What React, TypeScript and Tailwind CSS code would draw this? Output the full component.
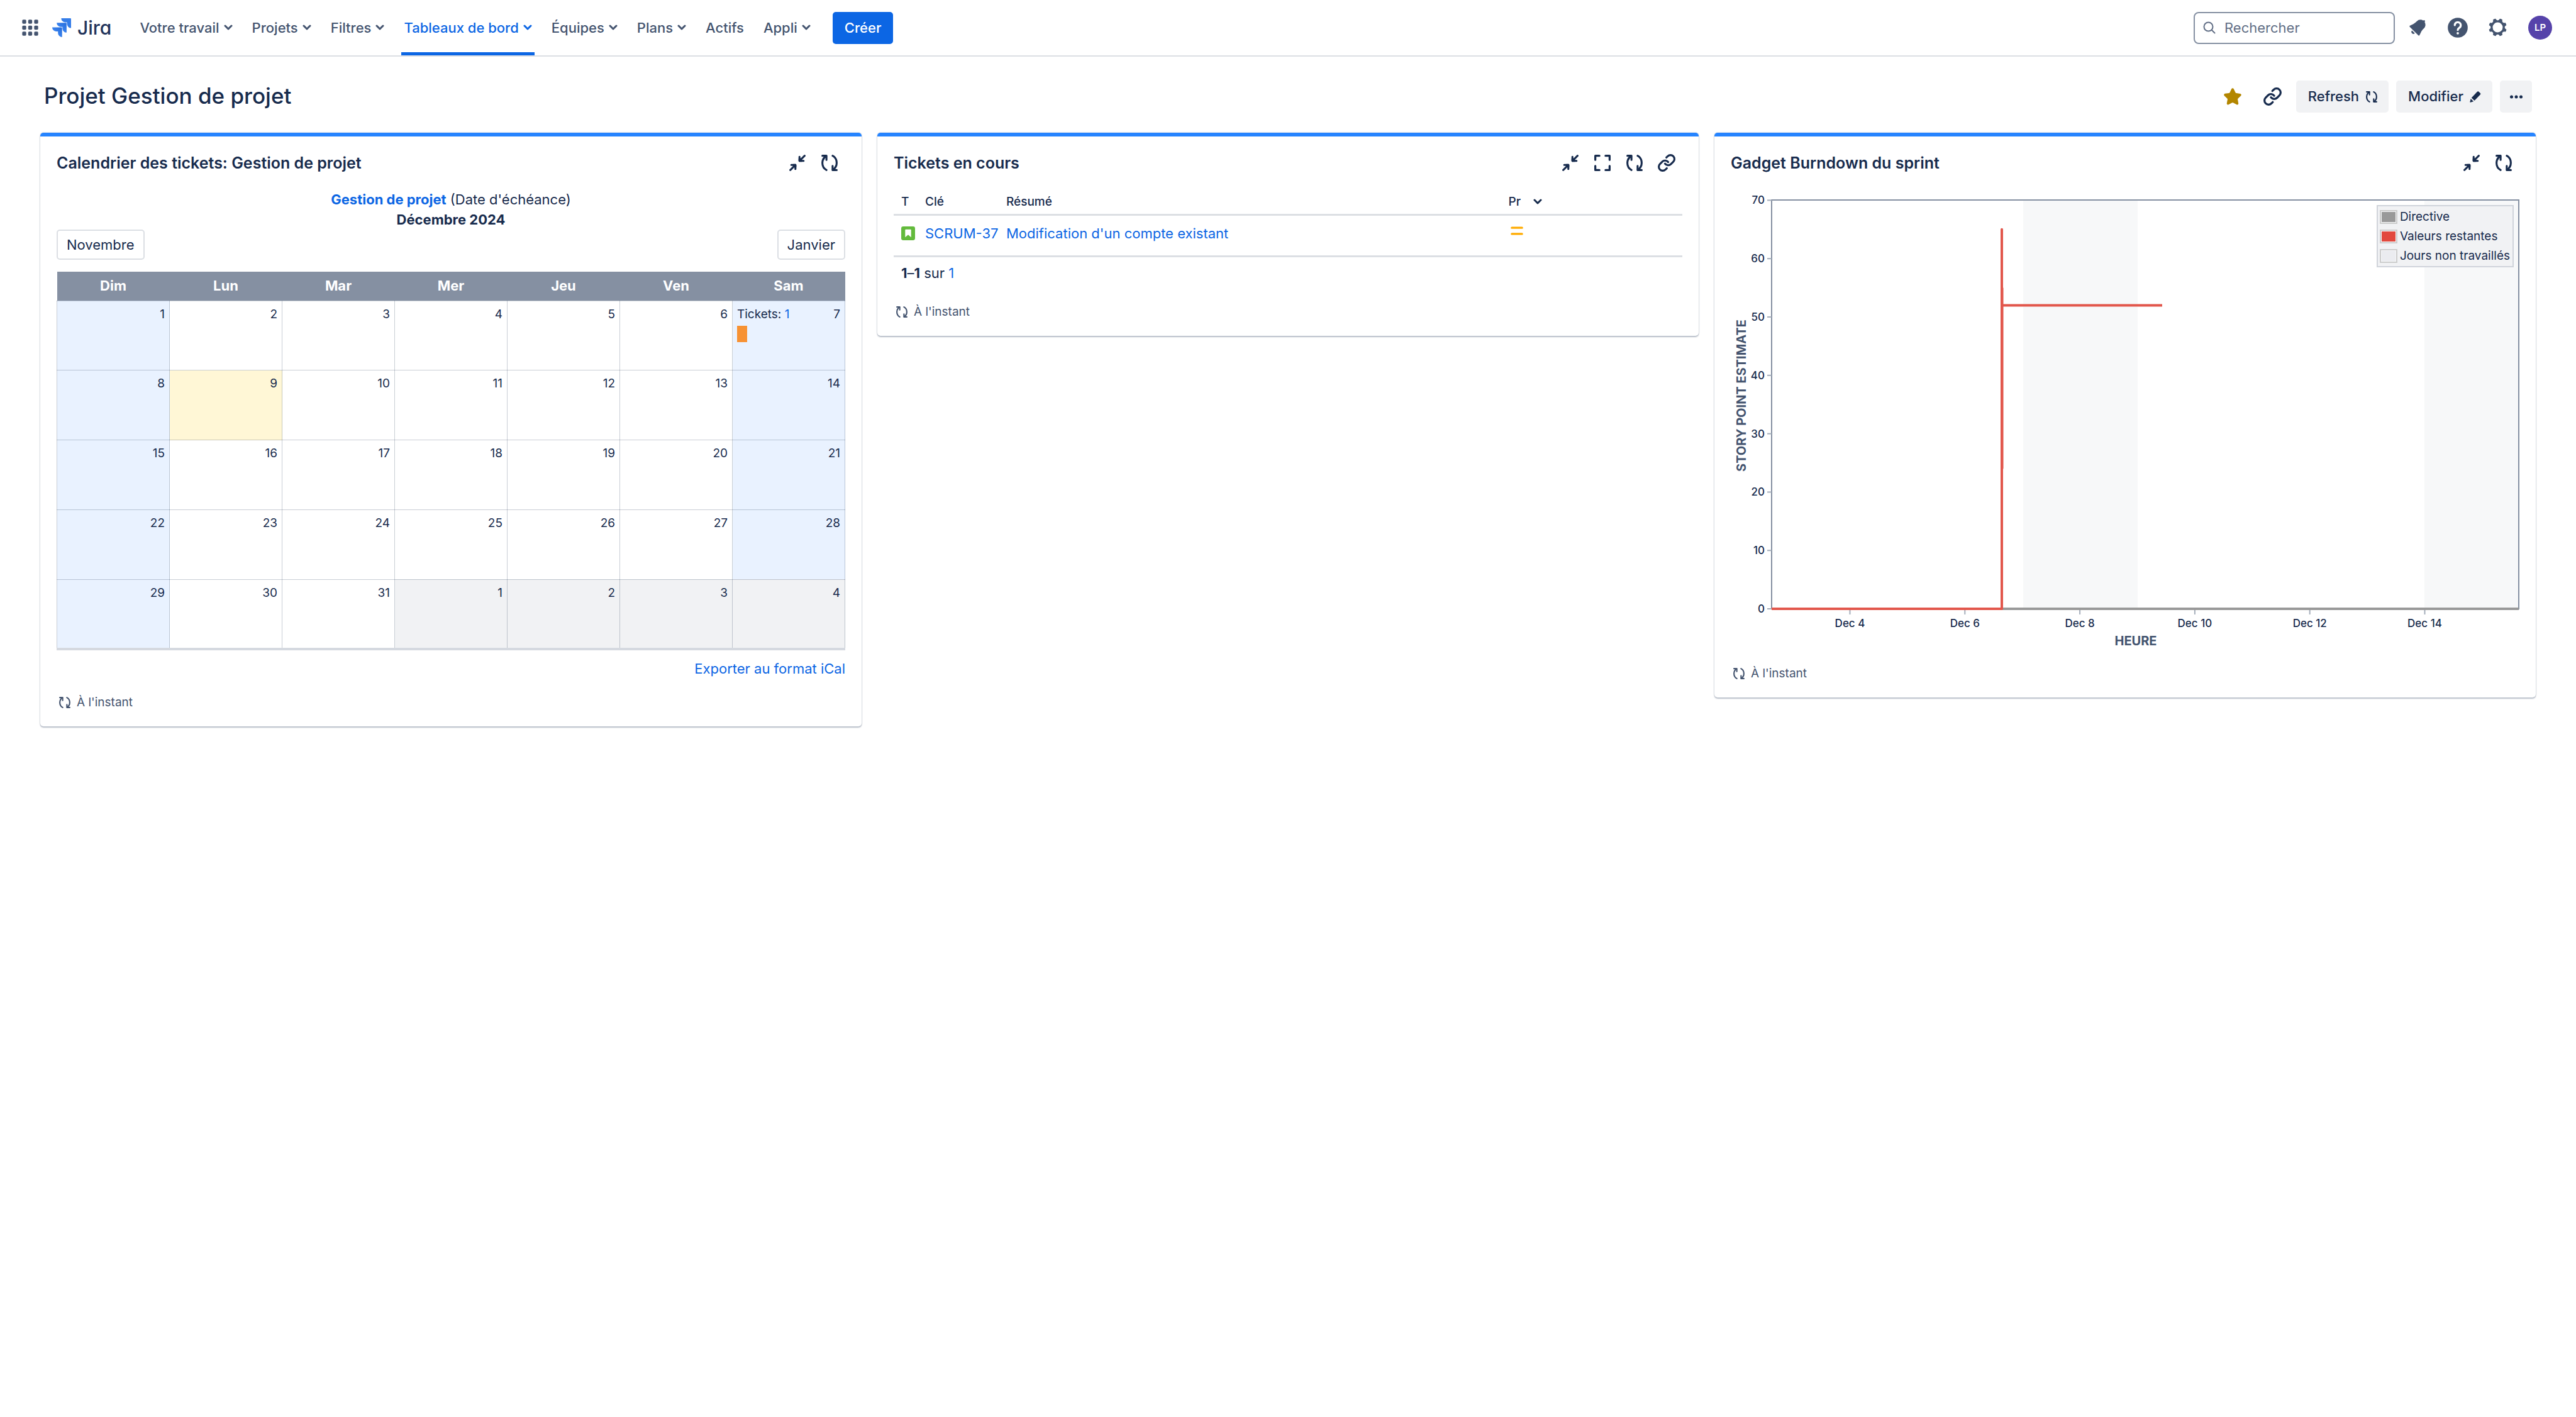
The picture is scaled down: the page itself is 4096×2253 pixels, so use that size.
import type { ReactNode } from "react";
import { Link as LinkIcon, Star } from "lucide-react";

const NAV = [
  { label: "Votre travail", menu: true, active: false },
  { label: "Projets", menu: true, active: false },
  { label: "Filtres", menu: true, active: false },
  { label: "Tableaux de bord", menu: true, active: true },
  { label: "Équipes", menu: true, active: false },
  { label: "Plans", menu: true, active: false },
  { label: "Actifs", menu: false, active: false },
  { label: "Appli", menu: true, active: false },
];

function Chevron() {
  return (
    <svg viewBox="0 0 14 10" className="h-[10px] w-[14px]" fill="none" stroke="currentColor" strokeWidth="3" strokeLinecap="round" strokeLinejoin="round">
      <path d="M2 2l5 5 5-5" />
    </svg>
  );
}

function RefreshIcon({ className }: { className: string }) {
  return (
    <svg viewBox="0 0 16 16" className={className} fill="none" stroke="currentColor" strokeWidth="1.9" strokeLinecap="round" strokeLinejoin="round">
      <path d="M1 1h4v4" />
      <path d="M5 15C2.4 13.6 1 11 1 8c0-2.600 1.200-5.100 3.700-6.700" />
      <path d="M15 15h-4v-4" />
      <path d="M11 1c2.600 1.400 4 4 4 7 0 2.600-1.200 5.100-3.700 6.700" />
    </svg>
  );
}

function CollapseIcon() {
  return (
    <svg viewBox="0 0 16 16" className="size-[26px]" fill="none" stroke="currentColor" strokeWidth="1.9" strokeLinecap="round" strokeLinejoin="round">
      <path d="M15 1l-5 5M10 2v4h4" />
      <path d="M10 4v2h2z" fill="currentColor" />
      <path d="M1 15l5-5M2 10h4v4" />
      <path d="M4 10h2v2z" fill="currentColor" />
    </svg>
  );
}

function ExpandIcon() {
  return (
    <svg viewBox="0 0 16 16" className="size-[26px]" fill="none" stroke="currentColor" strokeWidth="2" strokeLinecap="round" strokeLinejoin="round">
      <path d="M1 5V1h4M11 1h4v4M15 11v4h-4M5 15H1v-4" />
    </svg>
  );
}

function JiraMark() {
  return (
    <svg viewBox="0 0 24 24" className="size-[30px]">
      <defs>
        <linearGradient id="fold" x1="1" y1="0" x2="0.3" y2="0.7">
          <stop offset="0.2" stopColor="#2C72DF" />
          <stop offset="1" stopColor="#3D87F2" />
        </linearGradient>
      </defs>
      <path fill="url(#fold)" d="M11.571 11.513H0a5.218 5.218 0 0 0 5.232 5.215h2.13v2.057A5.215 5.215 0 0 0 12.575 24V12.518a1.005 1.005 0 0 0-1.005-1.005z" />
      <path fill="url(#fold)" d="M17.294 5.757H5.736a5.215 5.215 0 0 0 5.215 5.214h2.129v2.058a5.218 5.218 0 0 0 5.215 5.214V6.758a1.001 1.001 0 0 0-1.001-1.001z" />
      <path fill="#357DE8" d="M23.013 0H11.455a5.215 5.215 0 0 0 5.215 5.215h2.129v2.057A5.215 5.215 0 0 0 24 12.483V1.005A1.001 1.001 0 0 0 23.013 0z" />
    </svg>
  );
}

function TopBar() {
  return (
    <header className="flex h-[90px] items-center justify-between border-b-2 border-[#DCDFE4] pl-[29px] pr-[38px] text-[#44546F]">
      <div className="flex h-full items-center">
        <button type="button" aria-label="Changer d'application">
          <svg viewBox="0 0 24 24" className="size-[38px]" fill="currentColor">
            {[4, 10, 16].map((y) => [4, 10, 16].map((x) => <rect key={`${x}-${y}`} x={x} y={y} width="4" height="4" rx="1" />))}
          </svg>
        </button>
        <a href="#jira" className="ml-4 flex items-center gap-[10px]">
          <JiraMark />
          <span className="text-[30px] leading-[38px] font-medium text-[#22345A] [font-feature-settings:'cv11']">Jira</span>
        </a>
        <nav className="ml-[41px] flex h-full items-stretch gap-[23px]">
          {NAV.map((item) => (
            <button
              key={item.label}
              type="button"
              className={
                item.active
                  ? "relative flex items-center gap-[7px] px-[4px] text-[22px] font-medium text-[#0C66E4]"
                  : "flex items-center gap-[7px] px-[4px] text-[22px] font-medium"
              }
            >
              {item.label}
              {item.menu && <Chevron />}
              {item.active && <span className="absolute inset-x-0 bottom-0 h-[5px] bg-[#0C66E4]" />}
            </button>
          ))}
        </nav>
        <button type="button" className="ml-[31px] h-[51px] rounded-[5px] bg-[#0C66E4] px-[19px] text-[22px] font-medium text-white">
          Créer
        </button>
      </div>
      <div className="flex items-center">
        <label className="mr-[17px] flex h-[51px] w-[320px] items-center gap-[14px] rounded-[8px] border-2 border-[#8590A2] px-[13px]">
          <svg viewBox="0 0 20 20" className="size-5 shrink-0" fill="none" stroke="#626F86" strokeWidth="2" strokeLinecap="round">
            <circle cx="8.500" cy="8.500" r="7" />
            <path d="M14 14l4.500 4.500" />
          </svg>
          <input type="search" aria-label="Rechercher" placeholder="Rechercher" className="w-full min-w-0 bg-transparent text-[22px] outline-none placeholder:text-[#626F86]" />
        </label>
        <div className="flex items-center gap-[26px]">
          <button type="button" aria-label="Notifications">
            <svg viewBox="0 0 24 24" className="size-[38px]" fill="currentColor">
              <path d="M6.485 17.669a2 2 0 002.829 0l-2.829-2.83a2 2 0 000 2.830zm4.897-12.191l-.725.725c-.782.782-2.210 1.813-3.206 2.311l-3.017 1.509c-.495.248-.584.774-.187 1.171l8.556 8.556c.398.396.922.313 1.171-.188l1.510-3.016c.494-.988 1.526-2.420 2.311-3.206l.725-.726a5.048 5.048 0 00.640-6.356 1.010 1.010 0 10-1.354-1.494c-.023.025-.046.049-.066.075a5.043 5.043 0 00-2.788-.840 5.036 5.036 0 00-3.570 1.478z" />
            </svg>
          </button>
          <button type="button" aria-label="Aide">
            <svg viewBox="0 0 24 24" className="size-[38px]">
              <circle cx="12" cy="12" r="10" fill="currentColor" />
              <path d="M9 9.500a3 3 0 1 1 4.600 2.550c-1 .650-1.600 1.150-1.600 2.250" fill="none" stroke="white" strokeWidth="2" strokeLinecap="round" />
              <circle cx="12" cy="17.600" r="1.200" fill="white" />
            </svg>
          </button>
          <button type="button" aria-label="Paramètres">
            <svg viewBox="0 0 24 24" className="size-[38px]" fill="currentColor" fillRule="evenodd">
              <path d="M11.701 16.700a5.002 5.002 0 110-10.003 5.002 5.002 0 010 10.004m8.368-3.117a1.995 1.995 0 01-1.346-1.885c0-.876.563-1.613 1.345-1.885a.480.480 0 00.315-.574 8.947 8.947 0 00-.836-1.993.477.477 0 00-.598-.195 2.040 2.040 0 01-1.290.080 1.988 1.988 0 01-1.404-1.395 2.040 2.040 0 01.076-1.297.478.478 0 00-.196-.597 8.980 8.980 0 00-1.975-.826.479.479 0 00-.574.314 1.995 1.995 0 01-1.885 1.346 1.994 1.994 0 01-1.884-1.345.482.482 0 00-.575-.315c-.708.200-1.379.485-2.004.842a.470.470 0 00-.198.582A2.002 2.002 0 014.445 7.060a.478.478 0 00-.595.196 8.946 8.946 0 00-.833 1.994.480.480 0 00.308.572 1.995 1.995 0 011.323 1.877c0 .867-.552 1.599-1.324 1.877a.479.479 0 00-.308.570 8.990 8.990 0 00.723 1.790.477.477 0 00.624.194c.595-.273 1.343-.264 2.104.238.117.077.225.185.302.300.527.800.512 1.580.198 2.188a.473.473 0 00.168.628 8.946 8.946 0 002.110.897.474.474 0 00.570-.313 1.995 1.995 0 011.886-1.353c.879 0 1.619.567 1.887 1.353a.475.475 0 00.570.313 8.964 8.964 0 002.084-.883.473.473 0 00.167-.631c-.318-.608-.337-1.393.191-2.195.077-.116.185-.225.302-.302.772-.511 1.527-.513 2.125-.230a.477.477 0 00.628-.190 8.925 8.925 0 00.728-1.793.478.478 0 00-.314-.573" />
            </svg>
          </button>
          <button type="button" aria-label="Profil" className="ml-[3px] flex size-[38px] items-center justify-center rounded-full bg-[#5643AA] text-[15px] font-semibold text-white">
            LP
          </button>
        </div>
      </div>
    </header>
  );
}

function PageHeading() {
  return (
    <div className="mt-[38px] mb-[32px] flex h-[51px] items-start justify-between pl-[70px] pr-[70px]">
      <h1 className="text-[35px] leading-[48px] font-medium">Projet Gestion de projet</h1>
      <div className="flex items-center gap-[12px] text-[22px] font-medium">
        <button type="button" aria-label="Retirer des favoris" className="flex size-[51px] items-center justify-center text-[#B38600]">
          <Star className="size-[30px]" fill="currentColor" strokeWidth={2} />
        </button>
        <button type="button" aria-label="Copier le lien" className="flex size-[51px] items-center justify-center">
          <LinkIcon className="size-[31px]" strokeWidth={2.5} />
        </button>
        <button type="button" className="flex h-[51px] items-center gap-[11px] rounded-[5px] bg-[#F1F2F4] pr-[18px] pl-[19px]">
          Refresh
          <RefreshIcon className="size-[18px]" />
        </button>
        <button type="button" className="flex h-[51px] items-center gap-[9px] rounded-[5px] bg-[#F1F2F4] pr-[17px] pl-[19px]">
          Modifier
          <svg viewBox="0 0 20 20" className="size-[20px]" fill="currentColor">
            <path d="M12.800 2.100c.8-.9 1.700-1 2.500-.3l2.400 2.200c.8.800.8 1.700 0 2.500L8.600 16.100 3.800 11.600z" />
            <path d="M2.700 13l4.400 4.200-4.800 1.600c-.6.200-1-.2-.9-.8z" />
          </svg>
        </button>
        <button type="button" aria-label="Plus d'actions" className="flex size-[51px] items-center justify-center rounded-[5px] bg-[#F1F2F4]">
          <svg viewBox="0 0 20 6" className="h-[6px] w-5" fill="currentColor">
            <circle cx="2.500" cy="3" r="2.500" />
            <circle cx="10" cy="3" r="2.500" />
            <circle cx="17.500" cy="3" r="2.500" />
          </svg>
        </button>
      </div>
    </div>
  );
}

function Gadget({ title, expandable = false, children }: { title: string; expandable?: boolean; children: ReactNode }) {
  return (
    <section className="overflow-hidden rounded-[5px] bg-white shadow-[0_2px_2px_rgba(9,30,66,0.25),0_0_2px_rgba(9,30,66,0.31)]">
      <div className="h-[6px] bg-[#2684FF]" />
      <div className="px-[26px] pb-[22px]">
        <div className="flex h-[84px] items-center justify-between">
          <h2 className="text-[25px] leading-[32px] font-semibold">{title}</h2>
          <div className="mr-[12px] flex items-center gap-[25px]">
            <button type="button" aria-label="Réduire"><CollapseIcon /></button>
            {expandable && <button type="button" aria-label="Agrandir"><ExpandIcon /></button>}
            <button type="button" aria-label="Actualiser"><RefreshIcon className="size-[26px]" /></button>
            {expandable && (
              <a href="#tickets" aria-label="Ouvrir la recherche">
                <LinkIcon className="-mx-[2px] size-[30px]" strokeWidth={2.5} />
              </a>
            )}
          </div>
        </div>
        {children}
        <div className="flex items-center gap-[10px] pl-[4px] text-[19px] leading-[32px] text-[#44546F]">
          <RefreshIcon className="size-[18px]" />
          À l'instant
        </div>
      </div>
    </section>
  );
}

const DAYS = ["Dim", "Lun", "Mar", "Mer", "Jeu", "Ven", "Sam"];

function cellColor(day: number, col: number, outside: boolean) {
  if (outside) return "h-[110px] border border-[#091E42]/22 bg-[#F1F2F4] p-0 align-top";
  if (day === 9) return "h-[110px] border border-[#091E42]/22 bg-[#FFF7D6] p-0 align-top";
  if (col === 0 || col === 6) return "h-[110px] border border-[#091E42]/22 bg-[#E9F2FF] p-0 align-top";
  return "h-[110px] border border-[#091E42]/22 p-0 align-top";
}

function CalendarGadget() {
  return (
    <Gadget title="Calendrier des tickets: Gestion de projet">
      <div className="text-center text-[22px] leading-[32px]">
        <p>
          <a href="#projet" className="font-bold text-[#0C66E4]">Gestion de projet</a> (Date d'échéance)
        </p>
        <p className="font-bold">Décembre 2024</p>
      </div>
      <div className="mb-[19px] flex justify-between text-[22px]">
        <button type="button" className="h-[48px] rounded-[5px] border-2 border-[#DCDFE4] px-[14px]">Novembre</button>
        <button type="button" className="h-[48px] rounded-[5px] border-2 border-[#DCDFE4] px-[14px]">Janvier</button>
      </div>
      <table className="h-[602px] w-full table-fixed border-collapse border-b-4 border-[#D5D9E0]">
        <thead>
          <tr className="bg-[#8590A2] text-[22px] text-white">
            {DAYS.map((d) => (
              <th key={d} scope="col" className="h-[46px] p-0 font-bold">{d}</th>
            ))}
          </tr>
        </thead>
        <tbody className="text-[19px] leading-[32px]">
          {[0, 1, 2, 3, 4].map((week) => (
            <tr key={week}>
              {DAYS.map((d, col) => {
                const n = week * 7 + col + 1;
                const outside = n > 31;
                return (
                  <td key={d} className={cellColor(n, col, outside)}>
                    <div className="flex justify-between px-[7px] pt-[5px]">
                      <span>{n === 7 && <>Tickets: <a href="#tickets" className="text-[#0C66E4]">1</a></>}</span>
                      <span>{outside ? n - 31 : n}</span>
                    </div>
                    {n === 7 && <div className="ml-[7px] mt-[2px] h-[26px] w-[16px] bg-[#F79233]" />}
                  </td>
                );
              })}
            </tr>
          ))}
        </tbody>
      </table>
      <p className="mt-[13px] mb-[22px] text-right text-[22px] leading-[32px]">
        <a href="#ical" className="text-[#0C66E4]">Exporter au format iCal</a>
      </p>
    </Gadget>
  );
}

function TicketsGadget() {
  return (
    <Gadget title="Tickets en cours" expandable>
      <table className="w-full table-fixed border-collapse text-left">
        <thead>
          <tr className="h-[40px] border-b-3 border-[#DCDFE4] text-[19px]">
            <th scope="col" className="w-[38px] p-0 pt-[2px] pl-[12px] font-medium">T</th>
            <th scope="col" className="w-[129px] p-0 pt-[2px] pl-[12px] font-medium">Clé</th>
            <th scope="col" className="p-0 pt-[2px] pl-[12px] font-medium">Résumé</th>
            <th scope="col" className="w-[23%] p-0 pt-[2px] pl-[12px] font-medium">
              <span className="flex items-center gap-[20px]">Pr <Chevron /></span>
            </th>
          </tr>
        </thead>
        <tbody>
          <tr className="border-b-3 border-[#DCDFE4] text-[22px] leading-[32px] text-[#0C66E4]">
            <td className="p-0 pt-[12px] pb-[19px] pl-[12px]">
              <svg viewBox="0 0 14 14" className="size-[22px]" role="img" aria-label="Story">
                <rect width="14" height="14" rx="2" fill="#63BA3C" />
                <path d="M4 3.500a.5.5 0 0 1 .5-.5h5a.5.500 0 0 1 .5.500V11L7 8.500 4 11z" fill="white" />
              </svg>
            </td>
            <td className="p-0 pt-[12px] pb-[19px] pl-[12px] whitespace-nowrap"><a href="#scrum-37">SCRUM-37</a></td>
            <td className="p-0 pt-[12px] pb-[19px] pl-[12px]"><a href="#scrum-37">Modification d'un compte existant</a></td>
            <td className="p-0 pt-[8px] pb-[23px] pl-[12px]">
              <svg viewBox="0 0 16 16" className="size-[26px]" role="img" aria-label="Medium" fill="#FFAB00">
                <rect x="2" y="4" width="12" height="2" rx="1" />
                <rect x="2" y="10" width="12" height="2" rx="1" />
              </svg>
            </td>
          </tr>
        </tbody>
      </table>
      <p className="mt-[9px] mb-[30px] pl-[12px] text-[22px] leading-[32px]">
        <strong>1</strong>–<strong>1</strong> sur <a href="#tickets" className="text-[#0C66E4]">1</a>
      </p>
    </Gadget>
  );
}

const LEFT = 65;
const RIGHT = 1253;
const BASE = 667;
const yOf = (value: number) => BASE - value * 9.28;
const xOf = (day: number) => 189.5 + (day - 4) * 91.4;
const LEGEND = [
  { label: "Directive", swatch: "block h-4 w-[22px] bg-[#999999]" },
  { label: "Valeurs restantes", swatch: "block h-4 w-[22px] bg-[#E2483D]" },
  { label: "Jours non travaillés", swatch: "block h-4 w-[22px] bg-[#EBECF0]" },
];

function BurndownGadget() {
  return (
    <Gadget title="Gadget Burndown du sprint">
      <div className="relative mb-[20px]">
        <svg viewBox="0 0 1254 734" className="block h-auto w-full" role="img" aria-label="Burndown du sprint">
          <rect x="465" y="18" width="182" height="649" fill="#F7F8F9" />
          <rect x="1103" y="18" width="150" height="649" fill="#F7F8F9" />
          <rect x={LEFT} y="17" width={RIGHT - LEFT} height={BASE - 17} fill="none" stroke="#8590A2" strokeWidth="2" />
          <g stroke="#A5AEBB" strokeWidth="2">
            {[0, 10, 20, 30, 40, 50, 60, 70].map((v) => <line key={v} x1="58" x2={LEFT} y1={yOf(v)} y2={yOf(v)} />)}
            {[4, 6, 8, 10, 12, 14].map((d) => <line key={d} x1={xOf(d)} x2={xOf(d)} y1={BASE} y2={BASE + 9} />)}
          </g>
          <g fill="#172B4D" fontSize="17" fontWeight="500">
            {[0, 10, 20, 30, 40, 50, 60, 70].map((v) => <text key={v} x="54" y={yOf(v) + 6} textAnchor="end">{v}</text>)}
            {[4, 6, 8, 10, 12, 14].map((d) => <text key={d} x={xOf(d)} y="696" textAnchor="middle">{`Dec ${d}`}</text>)}
          </g>
          <g fill="#44546F" fontSize="20" fontWeight="700" textAnchor="middle">
            <text x="644" y="725">HEURE</text>
            <text transform="translate(24 328) rotate(-90)">STORY POINT ESTIMATE</text>
          </g>
          <line x1={LEFT} x2={RIGHT} y1={BASE} y2={BASE} stroke="#999999" strokeWidth="4" />
          <g fill="none" stroke="#E2574C" strokeLinejoin="round">
            <path d={`M${LEFT} ${BASE}H431V${yOf(65)}V${yOf(52)}H686`} strokeWidth="4" />
            <path d={`M433 ${yOf(55)}V${yOf(24)}`} strokeWidth="1" />
          </g>
        </svg>
        <ul className="absolute top-[25px] right-[9px] border-2 border-[#D0D4DB] bg-[#F1F2F4] py-px pr-[4px] pl-[3px] text-[19px] leading-[31px]">
          {LEGEND.map((l) => (
            <li key={l.label} className="flex items-center gap-[4px]">
              <span className="border-2 border-[#CCCCCC] bg-[#F7F8F9] p-px">
                <span className={l.swatch} />
              </span>
              {l.label}
            </li>
          ))}
        </ul>
      </div>
    </Gadget>
  );
}

export default function App() {
  return (
    <div className="min-h-screen bg-white font-['Inter','Liberation_Sans',sans-serif] text-[#172B4D]">
      <TopBar />
      <main>
        <PageHeading />
        <div className="grid grid-cols-3 items-start gap-[25px] px-[64px]">
          <CalendarGadget />
          <TicketsGadget />
          <BurndownGadget />
        </div>
      </main>
    </div>
  );
}
